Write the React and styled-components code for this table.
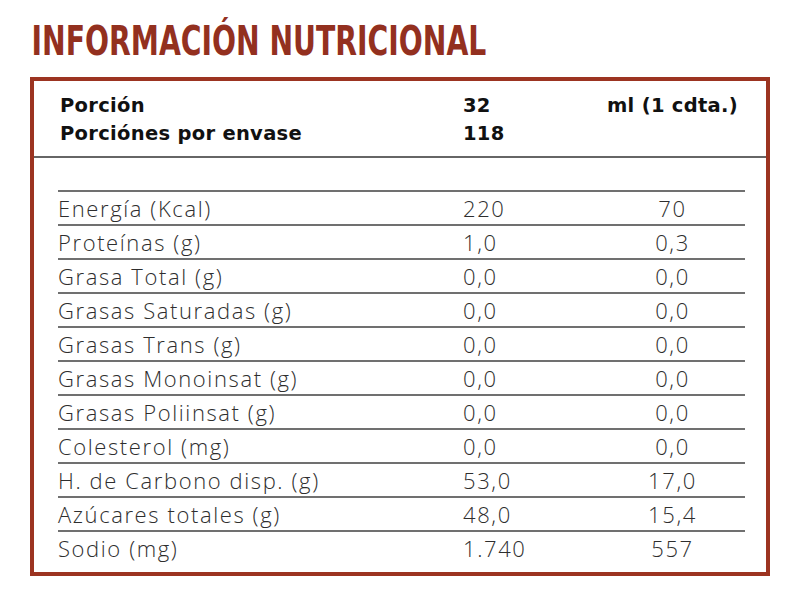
import React from 'react';
import styled, { createGlobalStyle } from 'styled-components';

const rows = [
  ['Energía (Kcal)', '220', '70'],
  ['Proteínas (g)', '1,0', '0,3'],
  ['Grasa Total (g)', '0,0', '0,0'],
  ['Grasas Saturadas (g)', '0,0', '0,0'],
  ['Grasas Trans (g)', '0,0', '0,0'],
  ['Grasas Monoinsat (g)', '0,0', '0,0'],
  ['Grasas Poliinsat (g)', '0,0', '0,0'],
  ['Colesterol (mg)', '0,0', '0,0'],
  ['H. de Carbono disp. (g)', '53,0', '17,0'],
  ['Azúcares totales (g)', '48,0', '15,4'],
  ['Sodio (mg)', '1.740', '557'],
];

const GlobalStyle = createGlobalStyle`
  body {
    margin: 0;
    background: #ffffff;
  }
`;

export default function App() {
  return (
    <>
      <GlobalStyle />
      <Page>
        <Title>INFORMACIÓN NUTRICIONAL</Title>
        <Panel>
          <Serving>
            <HeadRow>
              <span>Porción</span>
              <span>32</span>
              <Unit>ml (1 cdta.)</Unit>
            </HeadRow>
            <HeadRow>
              <span>Porciónes por envase</span>
              <span>118</span>
              <Unit />
            </HeadRow>
          </Serving>
          <Table>
            {rows.map(([label, a, b]) => (
              <Row key={label}>
                <span>{label}</span>
                <span>{a}</span>
                <Per>{b}</Per>
              </Row>
            ))}
          </Table>
        </Panel>
      </Page>
    </>
  );
}

const Page = styled.div`
  width: 800px;
  height: 608px;
  padding: 0 30px;
  box-sizing: border-box;
`;

const Title = styled.h1`
  margin: 0;
  padding: 21px 0 0 2px;
  height: 56px;
  box-sizing: border-box;
  font-family: 'DejaVu Sans Condensed', 'DejaVu Sans', sans-serif;
  font-weight: 700;
  font-size: 40px;
  line-height: 40px;
  color: #93301f;
  white-space: nowrap;
  transform: scaleX(0.785);
  transform-origin: left top;
`;

const Panel = styled.div`
  margin-top: 21px;
  width: 740px;
  height: 499px;
  box-sizing: border-box;
  border: 4px solid #9c3421;
`;

const Serving = styled.div`
  padding: 10px 0 9px 26px;
  border-bottom: 2px solid #666666;
`;

const HeadRow = styled.div`
  display: grid;
  grid-template-columns: 403px 137px 145px;
  height: 28px;
  align-items: center;
  font-family: 'DejaVu Sans', sans-serif;
  font-weight: 700;
  font-size: 19.5px;
  letter-spacing: 0.3px;
  color: #111111;
`;

const Unit = styled.span`
  text-align: center;
`;

const Table = styled.div`
  margin: 32px 21px 0 24px;
`;

const Row = styled.div`
  display: grid;
  grid-template-columns: 405px 137px 145px;
  height: 32px;
  align-items: center;
  border-top: 2px solid #707070;
  font-family: 'Open Sans', sans-serif;
  font-weight: 300;
  font-size: 22px;
  letter-spacing: 1.6px;
  color: #2e2e2e;
`;

const Per = styled.span`
  text-align: center;
`;
